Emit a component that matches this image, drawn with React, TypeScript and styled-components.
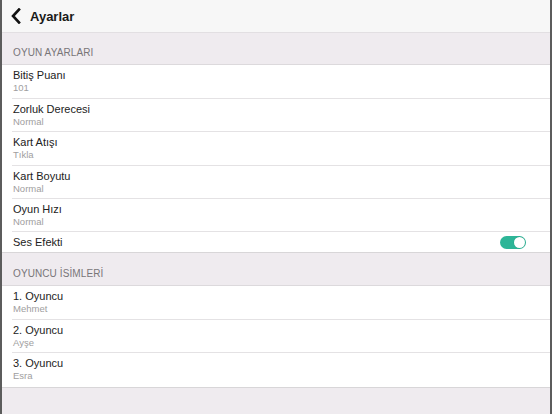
import React from "react";
import styled, { createGlobalStyle } from "styled-components";

const Global = createGlobalStyle`
  html, body { margin: 0; padding: 0; background: #efecef; }
  body { font-family: "Liberation Sans", Arial, sans-serif; }
`;

const Frame = styled.div`
  width: 552px;
  height: 414px;
  box-sizing: border-box;
  border-left: 2px solid #5c5c5c;
  border-right: 2px solid #5c5c5c;
  background: #efebef;
  display: flex;
  flex-direction: column;
  overflow: hidden;
`;

const NavBar = styled.div`
  height: 33px;
  flex: none;
  box-sizing: border-box;
  background: #f7f7f7;
  border-bottom: 1px solid #e2dfe2;
  display: flex;
  align-items: center;
  padding-left: 8px;
  gap: 8px;
`;

const Title = styled.span`
  font-size: 13px;
  font-weight: 700;
  color: #1a1a1a;
`;

const SectionHeader = styled.div<{ $h: number }>`
  height: ${(p) => p.$h}px;
  flex: none;
  box-sizing: border-box;
  display: flex;
  align-items: flex-end;
  padding: 0 0 6px 11px;
  font-size: 10px;
  color: #787578;
  letter-spacing: 0.1px;
  border-bottom: 1px solid #dcd9dc;
`;

const Group = styled.div`
  background: #ffffff;
  border-bottom: 1px solid #d8d6d8;
  flex: none;
`;

const Row = styled.div<{ $h: number; $last?: boolean }>`
  height: ${(p) => p.$h}px;
  box-sizing: border-box;
  margin-left: 10px;
  padding: 4px 24px 0 1px;
  border-bottom: ${(p) => (p.$last ? "none" : "1px solid #e4e2e4")};
  display: flex;
  align-items: flex-start;
  justify-content: space-between;
`;

const TextCol = styled.div`
  display: flex;
  flex-direction: column;
`;

const RowTitle = styled.span`
  font-size: 11px;
  line-height: 13px;
  color: #222;
`;

const RowSub = styled.span`
  font-size: 9.5px;
  line-height: 12px;
  color: #a09ea0;
`;

const Toggle = styled.div`
  width: 26px;
  height: 13px;
  border-radius: 7px;
  background: #2db597;
  position: relative;
  margin-top: 0px;
`;

const Knob = styled.div`
  position: absolute;
  right: 1px;
  top: 1px;
  width: 11px;
  height: 11px;
  border-radius: 50%;
  background: #fff;
  box-shadow: 0 0 0 0.5px rgba(0,0,0,0.1);
`;

const Chevron = () => (
  <svg width="12" height="16" viewBox="0 0 12 16">
    <path d="M9 1.5 L3 8 L9 14.5" fill="none" stroke="#111" strokeWidth="2.6" strokeLinecap="square" strokeLinejoin="miter" />
  </svg>
);

type Item = { title: string; sub?: string; h: number; toggle?: boolean };

const game: Item[] = [
  { title: "Bitiş Puanı", sub: "101", h: 33.5 },
  { title: "Zorluk Derecesi", sub: "Normal", h: 33.5 },
  { title: "Kart Atışı", sub: "Tıkla", h: 33.5 },
  { title: "Kart Boyutu", sub: "Normal", h: 33.5 },
  { title: "Oyun Hızı", sub: "Normal", h: 33 },
  { title: "Ses Efekti", h: 20, toggle: true },
];

const players: Item[] = [
  { title: "1. Oyuncu", sub: "Mehmet", h: 33.5 },
  { title: "2. Oyuncu", sub: "Ayşe", h: 33.5 },
  { title: "3. Oyuncu", sub: "Esra", h: 34 },
];

const renderRows = (items: Item[]) =>
  items.map((it, i) => (
    <Row key={it.title} $h={it.h} $last={i === items.length - 1}>
      <TextCol>
        <RowTitle>{it.title}</RowTitle>
        {it.sub && <RowSub>{it.sub}</RowSub>}
      </TextCol>
      {it.toggle && (
        <Toggle>
          <Knob />
        </Toggle>
      )}
    </Row>
  ));

export default function App() {
  return (
    <Frame>
      <Global />
      <NavBar>
        <Chevron />
        <Title>Ayarlar</Title>
      </NavBar>
      <SectionHeader $h={32}>OYUN AYARLARI</SectionHeader>
      <Group>{renderRows(game)}</Group>
      <SectionHeader $h={33}>OYUNCU İSİMLERİ</SectionHeader>
      <Group>{renderRows(players)}</Group>
    </Frame>
  );
}
